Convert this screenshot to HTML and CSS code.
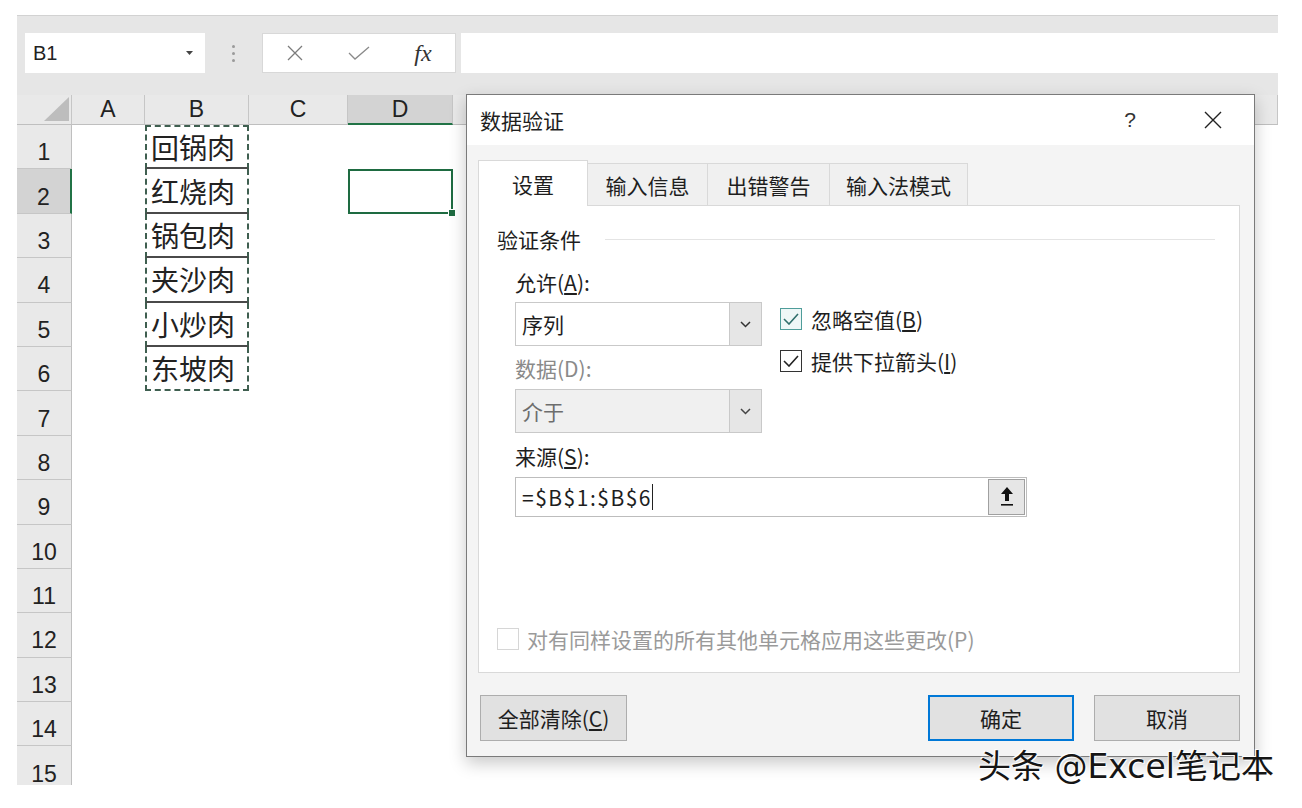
FILE: index.html
```html
<!DOCTYPE html>
<html lang="zh-CN">
<head>
    <meta charset="UTF-8">
    <meta name="viewport" content="width=device-width, initial-scale=1.0">
    <title>数据验证</title>
    <link rel="stylesheet" href="styles.css">
</head>
<body>
    <div class="sheet">
        <!-- 编辑栏 -->
        <div class="toolbar">
            <div class="namebox">
                <span>B1</span>
                <svg width="7" height="4" viewBox="0 0 7 4"><path d="M0 0H7L3.5 4Z" fill="#444"/></svg>
            </div>
            <div class="grip"><i></i><i></i><i></i></div>
            <div class="fxbtns">
                <span><svg width="18" height="16" viewBox="0 0 18 16"><path d="M2 1L16 15M16 1L2 15" stroke="#7c7c7c" stroke-width="1.3" fill="none"/></svg></span>
                <span><svg width="22" height="16" viewBox="0 0 22 16"><path d="M1 8L7 14L21 2" stroke="#8a8a8a" stroke-width="1.3" fill="none"/></svg></span>
                <span class="fx">fx</span>
            </div>
            <div class="formula"></div>
        </div>

        <!-- 表格 -->
        <div class="grid">
            <div class="corner"><svg width="25" height="24" viewBox="0 0 25 24"><path d="M25 0V24H0Z" fill="#bdbdbd"/></svg></div>
            <div class="ch">A</div>
            <div class="ch">B</div>
            <div class="ch">C</div>
            <div class="ch on">D</div>
            <div class="ch"></div>

            <div class="rh">1</div><div class="b top">回锅肉</div>
            <div class="rh on">2</div><div class="b">红烧肉</div><div class="sel"></div>
            <div class="rh">3</div><div class="b">锅包肉</div>
            <div class="rh">4</div><div class="b">夹沙肉</div>
            <div class="rh">5</div><div class="b">小炒肉</div>
            <div class="rh">6</div><div class="b last">东坡肉</div>
            <div class="rh">7</div>
            <div class="rh">8</div>
            <div class="rh">9</div>
            <div class="rh">10</div>
            <div class="rh">11</div>
            <div class="rh">12</div>
            <div class="rh">13</div>
            <div class="rh">14</div>
            <div class="rh">15</div>
        </div>
    </div>

    <!-- 数据验证对话框 -->
    <div class="dialog">
        <div class="titlebar">
            <span class="title">数据验证</span>
            <span class="help">?</span>
            <span class="close"><svg width="18" height="18" viewBox="0 0 18 18"><path d="M1 1L17 17M17 1L1 17" stroke="#222" stroke-width="1.4" fill="none"/></svg></span>
        </div>
        <div class="body">
            <div class="tabs">
                <div class="tab on">设置</div>
                <div class="tab">输入信息</div>
                <div class="tab">出错警告</div>
                <div class="tab">输入法模式</div>
            </div>
            <div class="panel">
                <div class="legend">验证条件<span class="rule"></span></div>
                <div class="fields">
                    <div class="col">
                        <div class="label">允许(<u>A</u>):</div>
                        <div class="select">
                            <span class="val">序列</span>
                            <span class="drop"><svg width="11" height="7" viewBox="0 0 11 7"><path d="M1 1L5.5 5.5L10 1" stroke="#333" stroke-width="1.5" fill="none"/></svg></span>
                        </div>
                        <div class="label gap off">数据(D):</div>
                        <div class="select off">
                            <span class="val">介于</span>
                            <span class="drop"><svg width="11" height="7" viewBox="0 0 11 7"><path d="M1 1L5.5 5.5L10 1" stroke="#444" stroke-width="1.5" fill="none"/></svg></span>
                        </div>
                    </div>
                    <div class="checks">
                        <div class="check">
                            <span class="box focus"><svg width="16" height="12" viewBox="0 0 16 12"><path d="M1 6L6 11L15 1" stroke="#2f6f6c" stroke-width="1.6" fill="none"/></svg></span>
                            <span>忽略空值(<u>B</u>)</span>
                        </div>
                        <div class="check">
                            <span class="box"><svg width="16" height="12" viewBox="0 0 16 12"><path d="M1 6L6 11L15 1" stroke="#222" stroke-width="1.6" fill="none"/></svg></span>
                            <span>提供下拉箭头(<u>I</u>)</span>
                        </div>
                    </div>
                </div>
                <div class="label src">来源(<u>S</u>):</div>
                <div class="source">
                    <span class="ref">=$B$1:$B$6</span><span class="cursor"></span>
                    <span class="upload"><svg width="12" height="20" viewBox="0 0 12 20"><path d="M6 0L12 7H8V14H4V7H0Z" fill="#111"/><rect x="0" y="17" width="12" height="1.6" fill="#111"/></svg></span>
                </div>
                <div class="apply">
                    <span class="box off"></span>
                    <span>对有同样设置的所有其他单元格应用这些更改(P)</span>
                </div>
            </div>
            <div class="footer">
                <div class="btn clear">全部清除(<u>C</u>)</div>
                <div class="btn ok">确定</div>
                <div class="btn">取消</div>
            </div>
        </div>
    </div>

    <div class="watermark">头条 @Excel笔记本</div>
</body>
</html>
```

FILE: styles.css
```css
/* 基础 */
body {
    margin: 0;
    background: #fff;
    font-family: "Liberation Sans", "Noto Sans CJK SC", sans-serif;
    color: #222;
}
.sheet {
    margin: 15px 0 0 17px;
    width: 1261px;
    height: 770px;
    overflow: hidden;
}

/* 编辑栏 */
.toolbar {
    height: 80px;
    box-sizing: border-box;
    background: #e6e6e6;
    border-top: 1px solid #d2d2d2;
    display: flex;
    align-items: flex-start;
    padding: 17px 0 0 8px;
}
.namebox {
    width: 180px;
    height: 40px;
    box-sizing: border-box;
    background: #fff;
    display: flex;
    align-items: center;
    justify-content: space-between;
    padding: 0 12px 0 8px;
    font-size: 20px;
}
.grip {
    width: 57px;
    height: 40px;
    display: flex;
    flex-direction: column;
    align-items: center;
    justify-content: center;
    gap: 4px;
}
.grip i {
    width: 3px;
    height: 3px;
    border-radius: 50%;
    background: #9a9a9a;
}
.fxbtns {
    width: 194px;
    height: 40px;
    box-sizing: border-box;
    background: #fff;
    border: 1px solid #d8d8d8;
    display: flex;
}
.fxbtns span {
    width: 64px;
    display: flex;
    align-items: center;
    justify-content: center;
}
.fxbtns .fx {
    font-family: "Liberation Serif", serif;
    font-style: italic;
    font-size: 24px;
    color: #333;
}
.formula {
    flex: 1;
    height: 40px;
    margin-left: 5px;
    background: #fff;
}

/* 表格 */
.grid {
    display: grid;
    grid-template-columns: 55px 73px 104px 99px 105px 1fr;
    grid-template-rows: 30px repeat(15, 44.4px);
}
.corner {
    grid-column: 1;
    background: #e9e9e9;
    border-right: 1px solid #c6c6c6;
    border-bottom: 1px solid #bfbfbf;
    display: flex;
    align-items: flex-end;
    justify-content: flex-end;
    padding: 0 2px 3px 0;
}
.ch {
    background: #e9e9e9;
    border-right: 1px solid #c6c6c6;
    border-bottom: 1px solid #bfbfbf;
    display: flex;
    align-items: center;
    justify-content: center;
    font-size: 23px;
}
.ch.on {
    background: #d3d3d3;
    border-bottom: 2px solid #217346;
}
.rh {
    grid-column: 1;
    background: #e9e9e9;
    border-right: 1px solid #bfbfbf;
    border-bottom: 1px solid #c6c6c6;
    display: flex;
    align-items: center;
    justify-content: center;
    padding-top: 12px;
    font-size: 23px;
}
.rh.on {
    background: #d3d3d3;
    border-right: 2px solid #217346;
}
.b {
    grid-column: 3;
    border-left: 2px dashed #3f5f50;
    border-right: 2px dashed #3f5f50;
    border-bottom: 2px solid #4a4a4a;
    display: flex;
    align-items: center;
    padding-left: 4px;
    font-family: "Noto Sans CJK SC", sans-serif;
    font-size: 28px;
    line-height: 1;
}
.b.top {
    border-top: 2px dashed #3f5f50;
}
.b.last {
    border-bottom: 2px dashed #3f5f50;
}
.sel {
    grid-column: 5;
    border: 2px solid #1e6b41;
    position: relative;
}
.sel::after {
    content: "";
    position: absolute;
    right: -5px;
    bottom: -5px;
    width: 6px;
    height: 6px;
    background: #1e6b41;
    border: 1px solid #fff;
}

/* 对话框 */
.dialog {
    position: absolute;
    left: 466px;
    top: 94px;
    width: 789px;
    height: 663px;
    box-sizing: border-box;
    border: 1px solid #7a7a7a;
    background: #f4f4f4;
    box-shadow: 0 6px 16px rgba(0, 0, 0, 0.22);
    display: flex;
    flex-direction: column;
    font-family: "Noto Sans CJK SC", sans-serif;
    font-size: 21px;
    line-height: 28px;
    color: #1e1e1e;
}
.titlebar {
    height: 50px;
    flex: none;
    background: #fff;
    display: flex;
    align-items: center;
    padding-left: 13px;
}
.title {
    flex: 1;
}
.help {
    width: 40px;
    text-align: center;
    font-family: "Liberation Sans", sans-serif;
    color: #333;
}
.close {
    width: 40px;
    margin: 0 21px 0 43px;
    display: flex;
    justify-content: center;
}
.body {
    flex: 1;
    padding: 15px 14px 0 11px;
    display: flex;
    flex-direction: column;
}
.tabs {
    height: 45px;
    display: flex;
    align-items: flex-end;
    position: relative;
    z-index: 1;
}
.tab {
    height: 42px;
    box-sizing: border-box;
    border: 1px solid #d9d9d9;
    border-bottom: none;
    background: #f0f0f0;
    display: flex;
    align-items: center;
    justify-content: center;
    margin-left: -1px;
}
.tab:nth-child(1) { width: 110px; margin-left: 0; }
.tab:nth-child(2) { width: 121px; }
.tab:nth-child(3) { width: 123px; }
.tab:nth-child(4) { width: 139px; }
.tab.on {
    height: 46px;
    margin-bottom: -1px;
    background: #fff;
}
.panel {
    height: 468px;
    box-sizing: border-box;
    background: #fff;
    border: 1px solid #d9d9d9;
    padding: 19px 0 19px 18px;
    display: flex;
    flex-direction: column;
}
.legend {
    display: flex;
    align-items: center;
    height: 28px;
}
.legend .rule {
    flex: 1;
    height: 1px;
    background: #e4e4e4;
    margin: 0 24px 0 24px;
}
.fields {
    display: flex;
    margin: 15px 0 0 18px;
}
.col {
    width: 247px;
}
.label {
    height: 28px;
}
.label.gap {
    margin-top: 8px;
}
.label.off {
    color: #8a8a8a;
}
.select {
    margin-top: 6px;
    height: 44px;
    box-sizing: border-box;
    border: 1px solid #c9c9c9;
    display: flex;
}
.select.off {
    margin-top: 7px;
    background: #f0f0f0;
    color: #6d6d6d;
}
.select .val {
    flex: 1;
    padding-left: 6px;
    display: flex;
    align-items: center;
}
.select .drop {
    width: 31px;
    background: #e6e6e6;
    border-left: 1px solid #c9c9c9;
    display: flex;
    align-items: center;
    justify-content: center;
}
.checks {
    margin-left: 18px;
    padding-top: 34px;
}
.check {
    height: 34px;
    display: flex;
    align-items: center;
    gap: 9px;
}
.check + .check {
    margin-top: 8px;
}
.box {
    width: 22px;
    height: 22px;
    box-sizing: border-box;
    border: 1.5px solid #333;
    display: flex;
    align-items: center;
    justify-content: center;
}
.box.focus {
    border-color: #4f9d9a;
    background: #eef7f7;
}
.box.off {
    border-color: #d6d6d6;
}
.label.src {
    margin: 9px 0 0 18px;
}
.source {
    margin: 7px 0 0 18px;
    width: 512px;
    height: 40px;
    box-sizing: border-box;
    border: 1px solid #bdbdbd;
    display: flex;
    align-items: center;
    padding-left: 6px;
}
.source .ref {
    letter-spacing: 1.5px;
}
.source .cursor {
    width: 1px;
    height: 26px;
    background: #222;
}
.source .upload {
    margin-left: auto;
    margin-right: 1px;
    width: 37px;
    height: 36px;
    box-sizing: border-box;
    background: #e6e6e6;
    border: 1px solid #a0a0a0;
    display: flex;
    align-items: center;
    justify-content: center;
}
.apply {
    margin-top: auto;
    height: 28px;
    display: flex;
    align-items: center;
    gap: 8px;
    color: #9a9a9a;
}
.footer {
    margin-top: 22px;
    padding-left: 2px;
    display: flex;
    gap: 20px;
}
.btn {
    width: 146px;
    height: 46px;
    box-sizing: border-box;
    background: #e1e1e1;
    border: 1px solid #adadad;
    display: flex;
    align-items: center;
    justify-content: center;
}
.btn.clear {
    width: 147px;
}
.btn.ok {
    margin-left: auto;
    border: 2px solid #0078d7;
}

/* 水印 */
.watermark {
    position: absolute;
    left: 978px;
    top: 747px;
    font-family: "DejaVu Sans", "Noto Sans CJK SC", sans-serif;
    font-size: 33px;
    line-height: 40px;
    color: #151515;
    text-shadow: 0 0 2px #fff, 1px 1px 0 #fff, -1px -1px 0 #fff;
}
```
